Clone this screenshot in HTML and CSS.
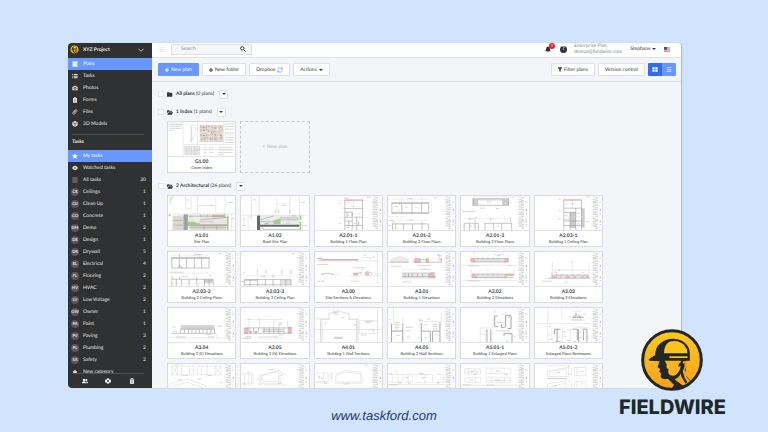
FILE: index.html
```html
<!DOCTYPE html>
<html lang="en">
<head>
<meta charset="utf-8">
<title>XYZ Project - Plans</title>
<link rel="stylesheet" href="styles.css">
</head>
<body>
<svg class="defs" aria-hidden="true">
  <symbol id="folder" viewBox="0 0 18 14"><path d="M0 2q0-2 2-2h4l2 2h6q2 0 2 2v8q0 2-2 2H2q-2 0-2-2z"/></symbol>
  <symbol id="folder-open" viewBox="0 0 18 14"><path d="M0 10V2q0-2 2-2h4l2 2h5q2 0 2 2v1H5q-2 0-3 2zM1 14l3-6q.6-1.500 2-1.500h12l-3 6q-.6 1.500-2 1.500z"/></symbol>
  <symbol id="logo" viewBox="0 0 184 184">
    <defs><linearGradient id="amber" x1="0" y1="0" x2="0" y2="1"><stop offset="0" stop-color="#fcca16"/><stop offset="1" stop-color="#f9a01f"/></linearGradient></defs>
    <circle cx="92" cy="92" r="87" fill="url(#amber)" stroke="#20282c" stroke-width="9"/>
    <path d="M23 90L42 77Q42 55 57 43Q72 29 95 29Q121 30 135 46Q145 57 145 73V94H134V116L130 136L150 156L125 173Q112 180 90 179L98 166L80 148Q62 152 58 140L60 132L54 127L57 119L49 113L55 96L25 94z" fill="#20282c"/>
    <path d="M68 72Q68 48 84 38Q96 34 108 36Q128 41 136 60L138 72z" fill="#fcc319"/>
    <path d="M84 81H138V86H84z" fill="#fcc319"/>
    <path d="M70 94H116L120 96L113 103L110 112L118 110L114 124L104 136Q94 142 83 134Q78 128 82 120L76 116V104z" fill="#fbb41b"/>
    <path d="M124 96H136V108L130 122L134 142L146 154Q134 164 124 168L100 150Q114 144 119 130L126 112z" fill="#fbab1c"/>
    <path d="M124 104L129 100V112L124 126L130 146L138 158L132 162L120 142L117 128z" fill="#20282c"/>
  </symbol>
  <symbol id="block" viewBox="0 0 32 106">
    <path d="M.5 0V106M24.500 0V106" stroke="#dcdcde" fill="none"/>
    <path d="M8 2V100M16 4V103" stroke="#888" stroke-width="8" stroke-dasharray="1.500 2 1 3" fill="none" opacity=".6"/>
    <path d="M28 18V106" stroke="#999" stroke-width="3" stroke-dasharray="3 19 8 5" fill="none" opacity=".6"/>
  </symbol>
</svg>

<div class="window">
  <aside class="sidebar">
    <button class="project"><svg class="project-logo"><use href="#logo"/></svg><span>XYZ Project</span><svg class="chev" viewBox="0 0 18 10"><path d="M1 1L9 9L17 1"/></svg></button>
    <nav class="list">
      <a class="row active" href="#"><svg class="ico" viewBox="0 0 18 18"><path d="M1 1h16v7h-5v9H1zM4 4v10M7 4v4" stroke="#6797ff" fill="#fff"/><path d="M10 10h7v7h-7z" opacity=".8"/></svg><span>Plans</span></a>
      <a class="row" href="#"><svg class="ico" viewBox="0 0 18 18"><path d="M1 3h3v3H1zM6 3h11v3H6zM1 8h3v3H1zM6 8h11v3H6zM1 13h3v3H1zM6 13h11v3H6z"/></svg><span>Tasks</span></a>
      <a class="row" href="#"><svg class="ico" viewBox="0 0 18 18"><path d="M1 5h4l1-3h6l1 3h4v11H1z"/><circle cx="9" cy="10" r="4" fill="#303133"/><circle cx="9" cy="10" r="2"/></svg><span>Photos</span></a>
      <a class="row" href="#"><svg class="ico" viewBox="0 0 18 18"><path d="M3 3h3V1h6v2h3v14H3z"/><path d="M6 7h6M6 10h6M6 13h4" stroke="#303133"/></svg><span>Forms</span></a>
      <a class="row" href="#"><svg class="ico line" viewBox="0 0 18 18"><path d="M5 10l5-6q3-3 5 0q1 2-1 4l-6 7q-3 2-5 0t0-5l7-8M6 12l5-6"/></svg><span>Files</span></a>
      <a class="row" href="#"><svg class="ico" viewBox="0 0 18 18"><path d="M9 0l8 4v9l-8 5l-8-5V4z"/><path d="M3 5l6 3l6-3M9 8v8" stroke="#303133" stroke-width="2" fill="none"/></svg><span>3D Models</span></a>
      <h2>Tasks</h2>
      <a class="row active" href="#"><svg class="ico" viewBox="0 0 18 18"><path d="M9 1l2.400 5.500 6 .5-4.500 4 1.300 6L9 14l-5.200 3 1.300-6L.6 7l6-.5z"/></svg><span>My tasks</span></a>
      <a class="row" href="#"><svg class="ico" viewBox="0 0 18 18"><path d="M0 9q9-13 18 0q-9 13-18 0z"/><circle cx="9" cy="9" r="2.500" fill="#303133"/></svg><span>Watched tasks</span></a>
      <a class="row" href="#"><svg class="ico" viewBox="0 0 18 18"><path d="M1 2h16v2H1zM1 8h16v2H1zM1 14h16v2H1z"/></svg><span>All tasks</span><b>30</b></a>
      <a class="row" href="#"><i>CE</i><span>Ceilings</span><b>1</b></a>
      <a class="row" href="#"><i>CU</i><span>Clean Up</span><b>1</b></a>
      <a class="row" href="#"><i>CO</i><span>Concrete</span><b>1</b></a>
      <a class="row" href="#"><i>DM</i><span>Demo</span><b>2</b></a>
      <a class="row" href="#"><i>DE</i><span>Design</span><b>1</b></a>
      <a class="row" href="#"><i>DR</i><span>Drywall</span><b>5</b></a>
      <a class="row" href="#"><i>EL</i><span>Electrical</span><b>4</b></a>
      <a class="row" href="#"><i>FL</i><span>Flooring</span><b>2</b></a>
      <a class="row" href="#"><i>HV</i><span>HVAC</span><b>2</b></a>
      <a class="row" href="#"><i>LV</i><span>Low Voltage</span><b>2</b></a>
      <a class="row" href="#"><i>OW</i><span>Owner</span><b>1</b></a>
      <a class="row" href="#"><i>PA</i><span>Paint</span><b>1</b></a>
      <a class="row" href="#"><i>PV</i><span>Paving</span><b>3</b></a>
      <a class="row" href="#"><i>PL</i><span>Plumbing</span><b>2</b></a>
      <a class="row" href="#"><i>SA</i><span>Safety</span><b>2</b></a>
      <a class="row" href="#"><svg class="ico" viewBox="0 0 18 18"><path d="M7 3h4v4h4v4h-4v4H7v-4H3V7h4z"/></svg><span>New category</span></a>
    </nav>
    <div class="side-foot">
      <button aria-label="People"><svg class="ico" viewBox="0 0 18 18"><circle cx="6" cy="6" r="3.500"/><path d="M0 16q0-6 6-6t6 6z"/><circle cx="13" cy="6" r="3"/><path d="M13 16h5q0-6-6-6q2 2 1 6z"/></svg></button>
      <button aria-label="Settings"><svg class="ico" viewBox="0 0 18 18"><path fill-rule="evenodd" d="M7 1h4l.6 2.500 2.400 1.400 2.500-.8 1.500 3.400-1.800 1.500 1.800 1.600-1.500 3.400-2.500-.8-2.400 1.300L11 17H7l-.6-2.500L4 13.200l-2.500.8L0 10.600 1.800 9 0 7.500l1.500-3.400 2.500.8 2.400-1.400zM9 6a3 3 0 1 0 0 6a3 3 0 1 0 0-6z"/></svg></button>
      <button aria-label="Trash"><svg class="ico" viewBox="0 0 18 18"><path d="M2 2h4V1h6v1h4v2H2zM3 5h12v12H3z"/><path d="M6.500 7v8M9 7v8M11.500 7v8" stroke="#303133"/></svg></button>
    </div>
  </aside>

  <main>
    <header class="topbar">
      <button class="menu" aria-label="Menu"><svg viewBox="0 0 18 16"><path d="M0 1h18M0 8h18M0 15h18"/></svg></button>
      <form class="search"><input type="text" placeholder="Search" aria-label="Search"><svg viewBox="0 0 18 18"><circle cx="7" cy="7" r="5"/><path d="M11 11l6 6"/></svg></form>
      <div class="account">
        <button class="bell" aria-label="Notifications"><svg viewBox="0 0 18 20"><path d="M9 1q6 1 6 8q0 4 3 6H0q3-2 3-6q0-7 6-8zM6 17h6q-3 4-6 0z"/></svg><span>3</span></button>
        <button class="help" aria-label="Help">?</button>
        <p>Enterprise Plan<br>demos@fieldwire.com</p>
        <button class="user">Stephane <span class="caret"></span></button>
        <svg class="flag" viewBox="0 0 18 15"><path fill="#f4f0f2" d="M0 0h18v15H0z"/><path d="M0 1h18M0 5.300h18M0 9.600h18M0 13.900h18" stroke="#e25b6c" stroke-width="2.100"/><path fill="#3a4e9c" d="M0 0h9v8H0z"/></svg>
      </div>
    </header>

    <div class="toolbar">
      <button class="btn primary"><svg class="plus" viewBox="0 0 12 12"><path d="M6 0v12M0 6h12"/></svg>New plan</button>
      <button class="btn"><svg class="plus" viewBox="0 0 12 12"><path d="M6 0v12M0 6h12"/></svg>New folder</button>
      <button class="btn dropbox">Dropbox<svg class="sync" viewBox="0 0 18 18"><path d="M2 8q1-6 7-6q4 0 6 4M16 1v5h-5M16 10q-1 6-7 6q-4 0-6-4M2 17v-5h5"/></svg></button>
      <button class="btn">Actions <span class="caret"></span></button>
      <button class="btn filter"><svg class="funnel" viewBox="0 0 12 14"><path d="M0 0h12v2L8 7v7l-4-2V7L0 2z"/></svg>Filter plans</button>
      <button class="btn">Version control</button>
      <div class="views">
        <button class="on" aria-label="Grid view"><svg viewBox="0 0 18 14"><path d="M1 0h7v6H1zM10 0h7v6h-7zM1 8h7v6H1zM10 8h7v6h-7z"/></svg></button>
        <button aria-label="List view"><svg viewBox="0 0 18 14"><path d="M2 0h14v2.500H2zM2 5.500h14V8H2zM2 11h14v2.500H2z"/></svg></button>
      </div>
    </div>

    <div class="content">
      <div class="group"><input type="checkbox" aria-label="Select all plans"><svg class="folder"><use href="#folder"/></svg><h3>All plans <span>(0 plans)</span></h3><button aria-label="All plans options"><span class="caret"></span></button></div>
      <div class="group"><input type="checkbox" aria-label="Select 1 Index"><svg class="folder"><use href="#folder-open"/></svg><h3>1 Index <span>(1 plans)</span></h3><button aria-label="1 Index options"><span class="caret"></span></button></div>
      <div class="cards">
        <a class="card" href="#"><svg viewBox="0 0 206 106">
          <path class="l" d="M45 0V106M90 0V75M172 0V106M45 70H206M172 40H206M0 4H42M80 85H206"/>
          <path class="t" d="M3 8H42M3 14H40M3 20H40M3 26H18M176 6H204M176 14H204M176 22H204M176 34H204M176 48H204M176 56H204M176 64H204"/>
          <path class="l" d="M68 12l12-4l5 18l-6 18l-10 20l-2-20l5-16z"/><path class="t" d="M72 16V62"/>
          <path fill="#dfd5d0" d="M97 9h73v53H97z"/><path fill="none" stroke="#b8a59d" stroke-width="4" stroke-dasharray="3 5 6 4" d="M99 15l14 3 12-4 18 5 20-4M99 28l20-4 14 8 35-6M99 40l16 3 20-5 31 5M101 54l22-5 18 5 26-5"/><path fill="none" stroke="#f7f2ee" stroke-width="2" d="M97 35l20-6 18 17 16-22 19 8M130 9l-5 53M152 10l3 51"/>
          <path class="t" d="M49 77H98M49 81H98M49 85H97M49 89H98M49 93H96M49 97H98M49 101H97M110 79H118M110 87H118M110 95H118M126 79H140M126 87H138M126 95H140M155 79H170M155 87H170M155 95H170M155 102H170M175 79H200M175 87H200M175 95H200"/>
        </svg><strong>G1.00</strong><span>Cover Index</span></a>
        <button class="new-card">+ New plan</button>
      </div>

      <div class="group"><input type="checkbox" aria-label="Select 2 Architectural"><svg class="folder"><use href="#folder-open"/></svg><h3>2 Architectural <span>(26 plans)</span></h3><button aria-label="2 Architectural options"><span class="caret"></span></button></div>
      <div class="cards">
        <a class="card" href="#"><svg viewBox="0 0 206 106">
          <path fill="#ded9cd" d="M12 61h36v45H12zM65 85h115v21H65z"/><path fill="#e7e7e5" d="M60 58h124v34H60z"/><path fill="#777" d="M47 57h13v49H47zM60 89h122v4H60z" opacity=".7"/>
          <path class="g" d="M60 80h18l10 5h10v7H60zM182 62h5v44h-5zM0 58h6v5H0z"/><path fill="#f1f0e5" d="M77 53h20v22q-10 8-20 0z"/><path fill="#c8bda7" d="M135 58h42v8h-42z"/>
          <path class="l" d="M90 0V52M147 0V52M176 0V58M53 0V40H70V0M0 56H206M196 56V106M90 30H147"/><path class="k" d="M62 63H175M98 74L182 67M62 98H180M16 76H44M16 91H44M100 58V66M120 58V66M150 93V106M110 93V106"/><path class="t" d="M3 4H18M3 10H14M3 16H10M55 12H65M128 29H138M186 20H200M100 80H140M197 70H205"/><path fill="none" stroke="#e8dfa2" stroke-width="2" d="M4 6V28"/>
        </svg><strong>A1.01</strong><span>Site Plan</span></a>
        <a class="card" href="#"><svg viewBox="0 0 206 106">
          <path fill="#e9ebec" d="M60 60h122v34H60z"/><path fill="#68696b" d="M48 60h10v46H48zM58 90h122v6H58z"/><path class="g" d="M99 76l22-6v18H99zM181 60h5v15h-5zM181 80h5v26h-5zM72 84h12v5H72z"/>
          <path class="l" d="M30 0V80M55 0V60M110 0V55M150 0V55M180 0V60M0 60H206M6 70V106M20 60V106M190 60V106M110 25H150"/><path class="k" d="M60 74L100 62M120 68H175V74H120M60 80H98M66 97V104H180"/><path class="t" d="M35 12H45M125 30H139M185 20H198M4 72H12M3 92H12M24 65H30M155 62H170M192 92H204M138 84H150"/><path class="r" d="M105 45V54M116 43V54M150 44V55"/>
        </svg><strong>A1.02</strong><span>Roof Site Plan</span></a>
        <a class="card" href="#"><svg viewBox="0 0 206 106">
          <path class="k" d="M91 12H146V106M91 12V106M91 39H146M91 50H114V67H91M114 50V106M119 66H146M91 78H114M91 92H146M128 66V106M98 50V67M103 78V92M134 78V92"/><path class="d" d="M75 15H160M75 38H160M75 67H160M91 3V12M146 3V12M118 12V39"/><path class="t" d="M100 20H106M112 32H122M133 55H140M100 60H104M118 85H126M96 98H105M72 23H78M72 85H80"/><path class="r" d="M91 14H146M91 7H103"/><path class="t" d="M160 3H172"/><use href="#block" x="174" width="32" height="106"/>
        </svg><strong>A2.01-1</strong><span>Building 1 Floor Plan</span></a>
        <a class="card" href="#"><svg viewBox="0 0 206 106">
          <path class="k" d="M10 23H125V52H10zM41 23V52M73 23V52M103 23V52M8 21H127M8 54H127M10 87H124M12 87V106M22 87V106M46 87V106M74 87V106M104 87V106M124 87V106"/><path class="d" d="M10 10H125M10 76H125M0 64H50M41 5V23M73 5V23M103 5V23M133 20V55"/><path class="t" d="M18 33H30M51 35H59M83 35H91M28 44H34M60 8H75M62 75H76M140 6H152M0 92H9"/><path class="r" d="M0 76H12L18 84M103 80L107 88M34 23V29"/><use href="#block" x="174" width="32" height="106"/>
        </svg><strong>A2.01-2</strong><span>Building 2 Floor Plans</span></a>
        <a class="card" href="#"><svg viewBox="0 0 206 106">
          <path class="k" d="M50 8H128V29H50zM50 12H128M8 85H52V106M8 85V106M25 85V106M42 85V106M72 85H157M73 85V106M100 85V106M125 85V106M156 85V106"/><path fill="#ccc" d="M35 7h14v24H35zM129 7h19v24h-19z"/><path class="k" d="M146 7V31M36 7V31"/><path class="d" d="M36 2H148M0 48H50M8 70H156M25 56V85M90 65V85M135 60V85"/><path class="t" d="M80 18H93M58 38H73M107 39H118M155 4H166M20 72H37M87 73H98M26 94H34M108 94H116M4 49H40"/><path class="r" d="M35 7V28M46 65L40 82M152 68V82"/><use href="#block" x="174" width="32" height="106"/>
        </svg><strong>A2.01-3</strong><span>Building 3 Floor Plans</span></a>
        <a class="card" href="#"><svg viewBox="0 0 206 106">
          <path class="k" d="M88 12H143V106M88 12V106M88 38H143M88 51H125M88 78H143M88 92H143M107 51V106M125 38V106"/><path fill="#999" opacity=".5" d="M107 50h18v50h-18zM143 38h10v60h-10z"/><path class="d" d="M75 12H160M88 3V12M143 3V12M88 25H143M115 12V38M88 65H160"/><path class="t" d="M112 24H119M92 61H100M91 73H103M130 54H138M130 87H138M155 80H166M158 3H169M72 46H80M72 72H80"/><path class="r" d="M88 13H143M75 8V13"/><use href="#block" x="174" width="32" height="106"/>
        </svg><strong>A2.03-1</strong><span>Building 1 Ceiling Plan</span></a>

        <a class="card" href="#"><svg viewBox="0 0 206 106">
          <path class="k" d="M10 17H126V50H10zM33 17V50M56 17V50M80 17V50M103 17V50M8 20H128M10 85H139V106M10 85V106M24 85V106M40 85V106M64 85V106M88 85V106M112 85V106M126 85V106M28 44H40V51"/><path fill="#999" opacity=".5" d="M110 86h28v10h-28z"/><path class="d" d="M10 10H126M10 98H140M0 66H150M33 4V17M80 4V17M80 65V85M10 70V85"/><path class="t" d="M80 8H105M4 63H46M40 77H61M155 5H166M126 73H134"/><path class="r" d="M34 8V18M90 7L100 17M10 76V84M34 76V84M88 76V86"/><use href="#block" x="174" width="32" height="106"/>
        </svg><strong>A2.03-2</strong><span>Building 2 Ceiling Plans</span></a>
        <a class="card" href="#"><svg viewBox="0 0 206 106">
          <path class="k" d="M8 86H154V106M8 86V106M26 86V106M50 86V106M74 86V106M98 86V106M122 86V106M138 86V106M8 88H48V84M10 102H154"/><path fill="#aaa" opacity=".35" d="M125 87h29v12h-29z"/><path class="d" d="M8 74H154M50 60V86M98 65V86M0 93H8M154 100H174"/><path class="t" d="M60 76H75M94 75H106M155 5H166M0 92H8"/><path class="r" d="M8 61V67M49 55V64M75 56V68M125 56V70M154 56V70"/><use href="#block" x="174" width="32" height="106"/>
        </svg><strong>A2.03-3</strong><span>Building 3 Ceiling Plan</span></a>
        <a class="card" href="#"><svg viewBox="0 0 206 106">
          <path class="r w" d="M10 25H132"/><path class="k" d="M3 21L20 19L22 23H133M18 70Q37 62 56 70M20 68V72M54 68V72M117 70L142 64V70M157 70V62Q176 62 176 70"/><path class="l" d="M145 25V17H172V25M0 28H196M60 70H74M105 74H205M180 68H202"/><path class="t" d="M4 39H40M5 91H28M111 91H135M119 49H157M142 56H149M150 10H160M178 16H186"/><path class="r" d="M14 14V18M118 66H130V72H118zM155 66H166V72H155z"/><path class="r w" d="M120 69H132M157 69H166"/><path class="l" d="M192 0V106"/>
        </svg><strong>A3.00</strong><span>Site Sections &amp; Elevations</span></a>
        <a class="card" href="#"><svg viewBox="0 0 206 106">
          <path class="l" fill="#e9e9e9" d="M7 31V22L35 14L61 22V31zM42 69H132V80H42z"/><path class="r" fill="#e4aaaa" d="M82 20H99V32H79zM118 20H124V32H118zM127 68H141L146 80H127z"/><path class="k" d="M78 32H165M100 24H118V32M42 66H145M42 76H145M51 67V79M62 67V79M73 67V79M90 67V79M106 67V79M125 67V79M0 32H63"/><path class="d" d="M45 55H132M84 10V20M120 8V20M40 83H148M140 32V16"/><path class="t" d="M5 44H40M90 42H132M100 54H130M42 93H70M153 10H168M165 18V32"/><path class="r" d="M155 5L165 31M132 64H144M152 24H165"/><use href="#block" x="174" width="32" height="106"/>
        </svg><strong>A3.01</strong><span>Building 1 Elevations</span></a>
        <a class="card" href="#"><svg viewBox="0 0 206 106">
          <path fill="#e4e4e4" d="M42 22h92v9H42zM42 71h92v9H42z"/><path class="k" d="M29 20H147M29 31H147M32 69H164M32 80H162M51 20V24M67 20V24M82 20V24M98 20V24M113 20V24M51 68V73M67 68V73M82 68V73M98 68V73M113 68V73"/><path class="r" fill="#dca0a0" d="M29 21H38L45 31H29zM132 31L136 22H146V31zM32 70H43L48 80H32zM136 70H162V74H140V80H133z"/><path class="l" d="M27 8V31M147 10V31M30 55V80M163 55V80M0 41H174M0 89H174"/><path class="t" d="M20 43H55M21 90H55M115 8H131M36 3H40M145 42H155M80 58H84M104 8L120 12"/><use href="#block" x="174" width="32" height="106"/>
        </svg><strong>A3.02</strong><span>Building 2 Elevations</span></a>
        <a class="card" href="#"><svg viewBox="0 0 206 106">
          <path fill="#e5e5e5" d="M51 73h116v8H51z"/><path class="k" d="M42 82H170M51 66V82M51 72H167M65 69V73M82 69V73M99 69V73M116 69V73M135 69V73M154 69V73"/><path class="r w" d="M52 78H67M75 78H80M93 78H106M117 78H126M141 78H150M157 78H167"/><path class="l" d="M52 30V65M114 30V65M167 30V65M50 56H167M25 82H42"/><path class="t" d="M20 91H52M58 63H66M145 64H151M68 57H77M90 93H100M110 31H113"/><use href="#block" x="174" width="32" height="106"/>
        </svg><strong>A3.03</strong><span>Building 2 Elevations</span></a>

        <a class="card" href="#"><svg viewBox="0 0 206 106">
          <path fill="#aaa" opacity=".6" d="M38 54h105v12H38z"/><path class="k" d="M35 66H145M8 79H147M38 66V78M50 66V78M62 66V78M73 66V78M85 66V78M96 66V78M107 66V78M120 66V78M132 66V78M143 66V78"/><path class="d" d="M40 57H143M40 60H143M40 63H143"/><path class="l" d="M15 80V65M150 80V90M0 93H174"/><path class="t" d="M12 59H21M152 56H167M115 83H132M122 90H142M24 90H54M18 73H28"/><use href="#block" x="174" width="32" height="106"/>
        </svg><strong>A3.04</strong><span>Building 3 (E) Elevations</span></a>
        <a class="card" href="#"><svg viewBox="0 0 206 106">
          <path class="r" fill="#e4a1a1" d="M9 63H20V79H9zM145 60H155V78H145zM25 72h6v6h-6zM40 73h8v5h-8z"/><path class="k" d="M5 79H158M10 62H155M23 62V75M37 62V75M53 62V75M70 60V79M86 60V79M100 60V79M116 62V79M132 62V79M65 68H130M65 73H130"/><path class="l" d="M23 35V60M55 35V60M100 35V60M116 50V62M143 36V60M10 36H130M50 90H115M0 93H135"/><path class="t" d="M21 35H27M53 36H57M114 47H128M116 53H126M116 84H131M12 89H30M101 88H108M72 66H82M103 66H109M3 95H28"/><use href="#block" x="174" width="32" height="106"/>
        </svg><strong>A3.05</strong><span>Building 3 (N) Elevations</span></a>
        <a class="card" href="#"><svg viewBox="0 0 206 106">
          <path class="k" opacity=".6" d="M42 35V17L70 9L104 18V35H132V106M42 35H15V106M20 40V106M127 40V106"/><path class="l" d="M0 67H206M0 34H42M12 30L20 42M127 40L139 28M137 39V79H193V39H137M155 69H180V79M56 0V15M70 0V9"/><path class="t" d="M55 14H72M55 19H70M80 30H91M57 91H84M155 42H181M156 46H170M178 68H184M140 84H160M27 48H34M118 52H128"/><path class="k" d="M57 94H85"/><path class="l" d="M193 0V106"/>
        </svg><strong>A4.01</strong><span>Building 1 Wall Sections</span></a>
        <a class="card" href="#"><svg viewBox="0 0 206 106">
          <path class="k w" d="M9 49V106M44 49V106M9 72H44M102 47V106M160 45V106M102 72H130V106M137 72V106M137 72H160"/><path class="l" d="M15 0V48M44 30V65M0 50H52M97 42H165V15M97 30V65M0 91H18M52 60H65"/><path class="t" d="M20 45H33M20 53H33M20 61H33M20 66H30M54 60H76M53 71H70M56 91H67M95 38H107M112 52H122M138 51H150M138 58H152M138 65H152M23 86H36M143 82H153M112 93H122M92 93H98M2 36H6M120 35H130"/><use href="#block" x="174" width="32" height="106"/>
        </svg><strong>A4.05</strong><span>Building 3 Wall Sections</span></a>
        <a class="card" href="#"><svg viewBox="0 0 206 106">
          <path class="k w" d="M102 25V58H114M102 25H112M124 50V61H135M137 24H154V64H143M137 24V60M79 66V106M91 66V106M132 80H157V106M132 80V88"/><path class="l" d="M58 106V62H98M124 20H154M100 45H135M62 82H96M76 75V106M128 75H162M106 20V60"/><path class="t" d="M113 45H130M144 30H151M106 71H151M102 12H106M164 12H166M134 14H140M71 73H77M95 80H98M88 99H94M138 103H148M163 90H168"/><use href="#block" x="174" width="32" height="106"/>
        </svg><strong>A5.01-1</strong><span>Building 1 Enlarged Plans</span></a>
        <a class="card" href="#"><svg viewBox="0 0 206 106">
          <path class="k w" d="M115 29H150M119 32V28Q123 20 126 25V15M140 32V28Q135 20 131 25M59 66H78M59 66V82M67 66V106M115 66H130V101M134 66V106M145 66H160V106M149 70V101M60 106H80"/><path class="l" d="M0 48H174M38 0V106M84 60V106M109 62V106M115 10H145M115 38H155M119 60H165M51 56V104M80 0V30"/><path class="t" d="M105 28H111M150 19H154M108 37H145M42 57H48M42 84H47M43 98H50M86 74H94M89 88H97M99 68H106M96 101H108M139 75H142M137 92H142M71 91H77M165 94H169M116 104H126M60 3H64"/><use href="#block" x="174" width="32" height="106"/>
        </svg><strong>A5.01-2</strong><span>Enlarged Plans Restrooms</span></a>

        <a class="card" href="#"><svg viewBox="0 0 206 106">
          <path class="l" d="M10 6H78V34H10zM10 6L28 34M28 6L10 34M28 6V34M65 6V34M65 20H78M89 6H163V34H89zM102 6V34M144 6V34M144 6L163 34M163 6L144 34M2 106V62L57 47L117 68V106M10 66V106M15 69L57 57L107 74V106M40 0V40M120 0V40"/><path class="t" d="M45 35H59M123 36H135M28 49H40M91 47H103M78 93H85M18 0H30M160 57H169"/><use href="#block" x="174" width="32" height="106"/>
        </svg></a>
        <a class="card" href="#"><svg viewBox="0 0 206 106">
          <path class="l" d="M0 31H36V60H0M10 31V60M31 31V60M22 31V60M60 35L120 18V60H60V35M65 36L115 23V54H65zM57 31V65M120 25L138 35M50 65H140M0 65H35"/><path class="t" d="M18 27H25M48 48H53M84 17H100M122 35H129M114 60H126M6 62H10"/><use href="#block" x="174" width="32" height="106"/>
        </svg></a>
        <a class="card" href="#"><svg viewBox="0 0 206 106">
          <path class="l" d="M0 28H39V55H0M25 28V55M12 35V50M63 56V32L92 20L141 26V56H63M65 35L92 25L138 30M141 34L151 56M0 59H42M58 60H150M48 28V55"/><path class="t" d="M48 32H52M48 42H52M85 62H103M8 40H15M17 44H22M27 60H35M153 3H162"/><use href="#block" x="174" width="32" height="106"/>
        </svg></a>
        <a class="card" href="#"><svg viewBox="0 0 206 106">
          <path class="l" d="M0 32H45V57H0M13 32V57M29 32V57M50 33H75V56H50M61 32V57M84 33H137V57H84M114 33V57M148 33H172V57H148M102 35L114 57M0 64H173M24 15V32M98 20V32"/><path class="t" d="M2 31H10M52 42H61M105 42H114M95 30H109M29 59H38M0 65H30M60 60H68M149 59H160"/><use href="#block" x="174" width="32" height="106"/>
        </svg></a>
        <a class="card" href="#"><svg viewBox="0 0 206 106">
          <path class="l" d="M10 15H60V31H10zM22 15V31M42 15V31M76 13H153V30H76zM92 13V30M133 13V30M10 42H60V58H10zM22 42V58M42 42V58M76 41H153V58H76zM92 41V58M133 41V58M0 66H173M10 25H60M76 51H153M45 31L58 15"/><path class="t" d="M28 23H39M27 50H37M106 22H122M105 50H121M4 65H30M79 66H102M37 33H47M133 33H142"/><use href="#block" x="174" width="32" height="106"/>
        </svg></a>
        <a class="card" href="#"><svg viewBox="0 0 206 106">
          <path class="l" d="M37 39V22L103 10V39H37zM42 35V25L97 14V35M121 11H157V36H121zM37 76V62L94 52V76H37M121 55H157V77H121zM37 46H103M129 11V36M43 72L90 60M112 11V36M129 55V77M37 5H103M113 55V76"/><path class="t" d="M65 27H76M101 7H107M105 32H109M103 53H107M140 23H148M37 45H95M141 62H147M58 68H65"/><use href="#block" x="174" width="32" height="106"/>
        </svg></a>
      </div>
    </div>
  </main>
</div>

<footer><a href="#">www.taskford.com</a></footer>
<div class="brand"><svg><use href="#logo"/></svg><span>FIELDWIRE</span></div>
</body>
</html>
```
FILE: styles.css
```css
* { box-sizing: border-box; }

body {
  margin: 0;
  height: 100vh;
  display: flex;
  flex-direction: column;
  position: relative;
  overflow: hidden;
  background: #d0e4fe;
  font-family: Lato, sans-serif;
  font-size: 5px;
  line-height: 8px;
  text-rendering: geometricPrecision;
  color: #38393c;
}

button, input {
  font: inherit;
  color: inherit;
  text-rendering: inherit;
  margin: 0;
  padding: 0;
  border: 0;
  background: none;
}

a { color: inherit; text-decoration: none; }
h2, h3, p { margin: 0; font-size: inherit; }
svg { display: block; flex: none; fill: currentColor; }
.defs { position: absolute; width: 0; height: 0; }

.window {
  flex: 1;
  min-height: 0;
  margin: 43px 87px 0 68px;
  display: flex;
  overflow: hidden;
  border-radius: 4px 4px 0 4px;
  background: #f4f5f8;
  box-shadow: 1px 0 1px #a9b8cc;
}

/* Sidebar */
.sidebar {
  width: 84px;
  flex: none;
  display: flex;
  flex-direction: column;
  background: #303133;
  color: #e6e6e7;
}

.project {
  height: 15px;
  flex: none;
  display: flex;
  align-items: center;
  gap: 4px;
  padding: 0 8px 2px 2px;
  font-weight: 700;
  color: #f2f2f2;
}
.project-logo { width: 9px; height: 9px; }
.chev { width: 6px; height: 4px; margin-left: auto; fill: none; stroke: #fff; stroke-width: 2; }

.list { flex: 1; min-height: 0; overflow: hidden; }
.row {
  height: 12px;
  display: flex;
  align-items: center;
  gap: 4px;
  padding: 0 6px 0 3px;
}
.row.active { background: #6797ff; color: #fff; }
.row b { margin-left: auto; font-weight: 400; }
.row i {
  width: 8px;
  height: 8px;
  flex: none;
  display: flex;
  align-items: center;
  justify-content: center;
  border-radius: 50%;
  background: #58595c;
  font-size: 4px;
  font-style: normal;
  font-weight: 700;
}
.ico { width: 6px; height: 6px; margin: 0 1px; }
.ico.line { fill: none; stroke: currentColor; stroke-width: 2; }
.list h2 {
  margin: 4px 8px 0 4px;
  padding: 3px 0 4px;
  border-top: 1px solid #505153;
  line-height: 8px;
}
.side-foot {
  height: 15px;
  flex: none;
  display: flex;
  justify-content: space-around;
  align-items: center;
  margin: 0 8px 0 4px;
  padding: 0 0 0 1px;
  border-top: 1px solid #505153;
  color: #fff;
}

/* Top bar */
main { flex: 1; min-width: 0; display: flex; flex-direction: column; }
.topbar {
  height: 15px;
  flex: none;
  display: flex;
  align-items: center;
  padding: 0 11px 2px 7px;
  background: #fff;
  border-bottom: 1px solid #dfe0e3;
}
.menu { width: 12px; }
.menu svg { width: 6px; height: 5px; stroke: #d4d5d8; stroke-width: 2; }
.search {
  width: 81px;
  height: 11px;
  display: flex;
  align-items: center;
  padding: 0 5px 0 9px;
  border: 1px solid #dedfe2;
  border-radius: 1px;
  background: #f5f6f8;
}
.search input { flex: 1; min-width: 0; outline: 0; }
.search input::placeholder { color: #8c8d90; opacity: 1; }
.search svg { width: 6px; height: 6px; fill: none; stroke: #333; stroke-width: 3; }
.account { margin-left: auto; display: flex; align-items: center; }
.bell { position: relative; margin-right: 9px; color: #303236; }
.bell svg { width: 6px; height: 7px; }
.bell span {
  position: absolute;
  left: 4px;
  top: -3px;
  width: 6px;
  height: 6px;
  border-radius: 50%;
  background: #f01822;
  color: #fff;
  font-size: 4px;
  line-height: 6px;
}
.help {
  width: 7px;
  height: 7px;
  border-radius: 50%;
  background: #303236;
  color: #fff;
  font-weight: 900;
  line-height: 7px;
}
.account p { margin: 0 8px 0 7px; color: #88898c; line-height: 6px; }
.user { margin-right: 8px; }
.caret {
  display: inline-block;
  vertical-align: middle;
  border: 1px solid transparent;
  border-width: 2px 2px 0;
  border-top-color: currentColor;
}
.flag { width: 6px; height: 5px; }

/* Toolbar */
.toolbar {
  height: 24px;
  flex: none;
  display: flex;
  align-items: center;
  gap: 3px;
  padding: 0 5px 0 6px;
  border-bottom: 1px solid #dfe0e3;
}
.btn {
  height: 13px;
  display: flex;
  align-items: center;
  justify-content: center;
  gap: 2px;
  padding: 0 6px;
  border: 1px solid #e0e1e4;
  border-radius: 1px;
  background: #fff;
  white-space: nowrap;
}
.btn.primary { background: #6797ff; border-color: #6797ff; color: #fff; }
.filter { margin-left: auto; }
.plus { width: 4px; height: 4px; stroke: currentColor; stroke-width: 3; }
.sync { width: 6px; height: 6px; fill: none; stroke: #6797ff; stroke-width: 2; }
.funnel { width: 4px; height: 5px; }
.views { display: flex; border-radius: 1px; overflow: hidden; }
.views button {
  width: 14px;
  height: 13px;
  display: flex;
  align-items: center;
  justify-content: center;
  background: #6797ff;
  color: #dce7ff;
}
.views .on { background: #2f6cf6; color: #fff; }
.views svg { width: 6px; height: 5px; }

/* Plans */
.content { flex: 1; min-height: 0; overflow: hidden; padding: 7px 0 0 6px; }
.group {
  height: 10px;
  display: flex;
  align-items: center;
  margin-bottom: 8px;
}
.group input {
  appearance: none;
  width: 6px;
  height: 6px;
  margin-right: 3px;
  border: 1px solid #e5e6e8;
  background: #fff;
}
.folder { width: 6px; height: 5px; margin-right: 3px; }
.group h3 { font-weight: 700; }
.group h3 span { font-weight: 400; }
.group button {
  width: 9px;
  height: 9px;
  margin-left: 5px;
  border: 1px solid #e0e1e4;
  border-radius: 1px;
  background: #fff;
  display: flex;
  align-items: center;
  justify-content: center;
}
.cards {
  max-width: 436px;
  display: grid;
  grid-template-columns: repeat(6, 1fr);
  gap: 4px;
  margin: 0 0 8px 9px;
}
.group + .cards { margin-top: -4px; }
.card {
  height: 52px;
  display: flex;
  flex-direction: column;
  border: 1px solid #dadbdd;
  background: #fff;
  text-align: center;
  line-height: 6px;
  overflow: hidden;
}
.card svg { width: 100%; height: 35px; border-bottom: 1px solid #e2e3e5; margin-bottom: 2px; }
.card span { font-size: 4px; white-space: nowrap; }
.new-card { border: 1px dashed #cacbce; color: #b3b4b7; }

.l { fill: none; stroke: #dededf; stroke-width: 2; }
.l[fill] { fill: #ececec; }
.k { fill: none; stroke: #a4a4a6; stroke-width: 2; }
.k.w { stroke-width: 3; }
.d { fill: none; stroke: #dcdcde; stroke-width: 2; stroke-dasharray: 6 3; }
.t { fill: none; stroke: #b4b4b6; stroke-width: 2; stroke-dasharray: 4 1; }
.r { fill: none; stroke: #e2a8a8; stroke-width: 2; }
.r[fill] { fill: #eabcbc; }
.r.w { stroke-width: 4; }
.g { fill: #a9c88c; }

/* Footer and brand */
footer {
  height: 44px;
  flex: none;
  padding-top: 20px;
  text-align: center;
  font: italic 13px/16px "Liberation Sans", sans-serif;
  color: #1c3a74;
}
.brand {
  position: absolute;
  right: 42px;
  bottom: 15px;
  display: flex;
  flex-direction: column;
  align-items: center;
  font: 800 20px/20px Inter, sans-serif;
  color: #20282c;
}
.brand svg { width: 62px; height: 62px; margin-bottom: 6px; }
```
